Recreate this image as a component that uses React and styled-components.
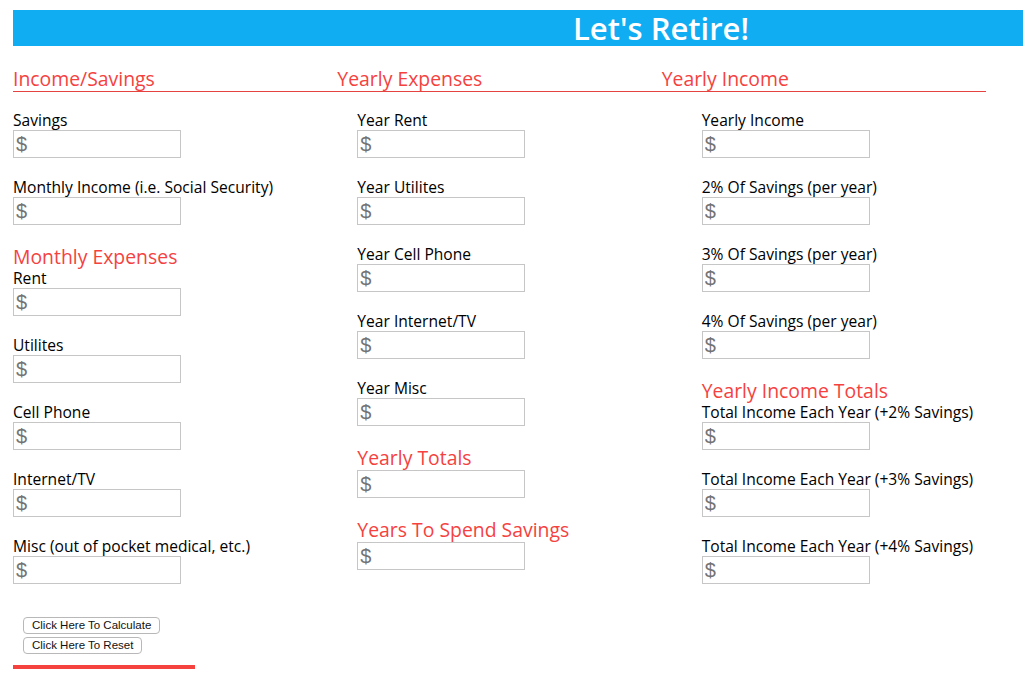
import React from 'react'
import styled, { createGlobalStyle } from 'styled-components'

const GlobalStyle = createGlobalStyle`
    body {
        margin: 0;
        font-family: "Open Sans", "Noto Sans", sans-serif;
        color: #000;
        background: #fff;
    }
`

const Page = styled.div`
    padding: 10px 0 0 13px;
`

const Header = styled.h1`
    margin: 0;
    height: 36px;
    line-height: 36px;
    padding-left: 286px;
    text-align: center;
    background: #10adf3;
    color: #fff;
    font-size: 31px;
    font-weight: 600;
`

const Sections = styled.div`
    display: grid;
    grid-template-columns: repeat(3, 1fr);
    width: 973px;
    margin-top: 22px;
`

const SectionTitle = styled.h2`
    margin: 0;
    padding-bottom: 2px;
    font-size: 19.4px;
    font-weight: 400;
    line-height: 21px;
    color: #f5423f;
    border-bottom: 1px solid #e4433f;
`

const Column = styled.div`
    padding: 19px 0 0 ${p => p.$indent || 0}px;
`

const SubTitle = styled.h3`
    margin: 0;
    font-size: 19.4px;
    font-weight: 400;
    line-height: 24px;
    color: #f5423f;
`

const Field = styled.div`
    display: flex;
    flex-direction: column;
    align-items: flex-start;
    margin-bottom: 20px;
`

const Label = styled.label`
    font-size: 15.6px;
    line-height: 19px;
    white-space: nowrap;
`

const Input = styled.input`
    box-sizing: border-box;
    width: 168px;
    height: 28px;
    margin: 0;
    padding: 0 2px;
    border: 1px solid #c6c6c6;
    font-family: "Liberation Sans", Arial, sans-serif;
    font-size: 20px;
    &::placeholder {
        color: #737373;
    }
`

const Actions = styled.div`
    display: flex;
    flex-direction: column;
    align-items: flex-start;
    gap: 3px;
    padding: 13px 0 0 10px;
`

const Botao = styled.button`
    height: 17px;
    padding: 0 8px;
    border: 1px solid #b8b8b8;
    border-radius: 4px;
    background: #fff;
    color: #111;
    font-family: "Liberation Sans", Arial, sans-serif;
    font-size: 11.5px;
    line-height: 15px;
`

const RedBar = styled.div`
    width: 182px;
    height: 4px;
    margin-top: 11px;
    background: #f5423f;
`

const MoneyField = ({ label }) => (
    <Field>
        {label && <Label>{label}</Label>}
        <Input type='text' placeholder='$' />
    </Field>
)

class App extends React.Component {
    render() {
        return (
            <Page>
                <GlobalStyle />
                <Header>Let's Retire!</Header>
                <Sections>
                    <SectionTitle>Income/Savings</SectionTitle>
                    <SectionTitle>Yearly Expenses</SectionTitle>
                    <SectionTitle>Yearly Income</SectionTitle>

                    <Column>
                        <MoneyField label='Savings' />
                        <MoneyField label='Monthly Income (i.e. Social Security)' />
                        <SubTitle>Monthly Expenses</SubTitle>
                        <MoneyField label='Rent' />
                        <MoneyField label='Utilites' />
                        <MoneyField label='Cell Phone' />
                        <MoneyField label='Internet/TV' />
                        <MoneyField label='Misc (out of pocket medical, etc.)' />
                    </Column>

                    <Column $indent={20}>
                        <MoneyField label='Year Rent' />
                        <MoneyField label='Year Utilites' />
                        <MoneyField label='Year Cell Phone' />
                        <MoneyField label='Year Internet/TV' />
                        <MoneyField label='Year Misc' />
                        <SubTitle>Yearly Totals</SubTitle>
                        <MoneyField />
                        <SubTitle>Years To Spend Savings</SubTitle>
                        <MoneyField />
                    </Column>

                    <Column $indent={40}>
                        <MoneyField label='Yearly Income' />
                        <MoneyField label='2% Of Savings (per year)' />
                        <MoneyField label='3% Of Savings (per year)' />
                        <MoneyField label='4% Of Savings (per year)' />
                        <SubTitle>Yearly Income Totals</SubTitle>
                        <MoneyField label='Total Income Each Year (+2% Savings)' />
                        <MoneyField label='Total Income Each Year (+3% Savings)' />
                        <MoneyField label='Total Income Each Year (+4% Savings)' />
                    </Column>
                </Sections>
                <Actions>
                    <Botao>Click Here To Calculate</Botao>
                    <Botao>Click Here To Reset</Botao>
                </Actions>
                <RedBar />
            </Page>
        )
    }
}

export default App
